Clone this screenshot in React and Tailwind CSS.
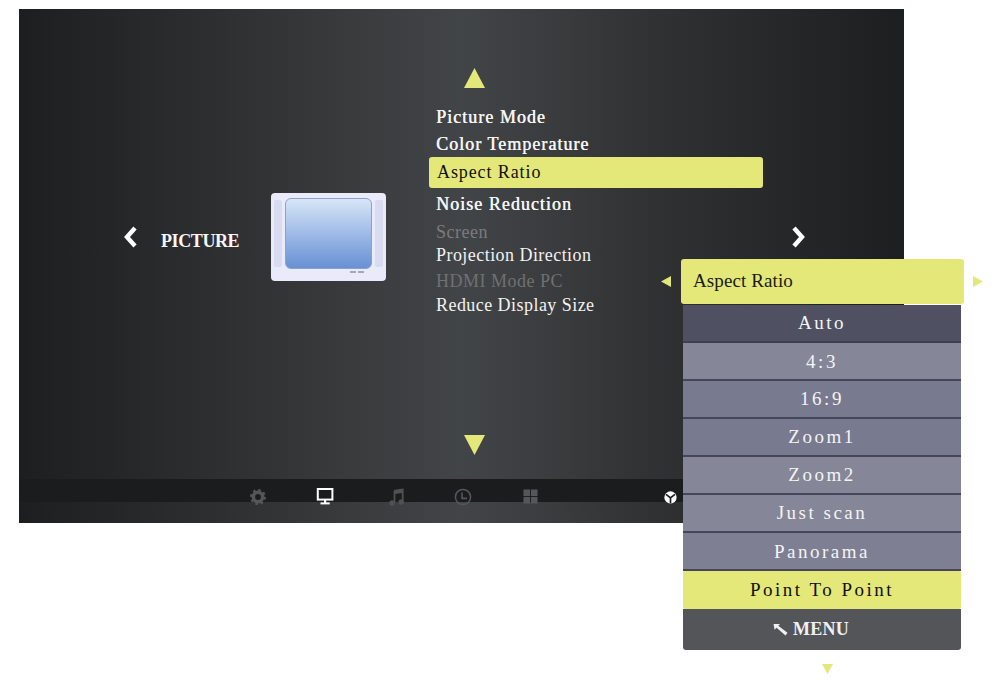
const serif = "font-['Liberation_Serif',serif]";

function Triangle({ dir, className }) {
  const points = {
    up: '50,0 100,100 0,100',
    down: '0,0 100,0 50,100',
    left: '100,0 100,100 0,50',
    right: '0,0 100,50 0,100',
  };
  return (
    <svg viewBox="0 0 100 100" preserveAspectRatio="none" className={className}>
      <polygon points={points[dir]} fill="#e3e878" />
    </svg>
  );
}

function Chevron({ flip }) {
  return (
    <svg viewBox="0 0 14 22" className="w-[14px] h-[22px]">
      <polyline
        points={flip ? '3,2 11,11 3,20' : '11,2 3,11 11,20'}
        fill="none"
        stroke="#fff"
        strokeWidth="4.4"
      />
    </svg>
  );
}

function GearIcon() {
  return (
    <svg viewBox="0 0 20 20" className="w-[18px] h-[18px]">
      <circle cx="10" cy="10" r="5.2" fill="none" stroke="#545658" strokeWidth="4" />
      <circle cx="10" cy="10" r="7.6" fill="none" stroke="#545658" strokeWidth="2.6" strokeDasharray="2.9 3.07" />
    </svg>
  );
}

function MonitorIcon() {
  return (
    <svg viewBox="0 0 18 17" className="w-[18px] h-[17px]">
      <rect x="1.8" y="1" width="14.6" height="10.6" fill="none" stroke="#fff" strokeWidth="2" />
      <rect x="8" y="12" width="2.2" height="3" fill="#fff" />
      <rect x="4.5" y="14.4" width="9.2" height="2" fill="#fff" />
    </svg>
  );
}

function MusicIcon() {
  return (
    <svg viewBox="0 0 18 18" className="w-[18px] h-[18px]">
      <path d="M6.6 3 Q7 1.6 9 1.4 L16.6 0.4 V13.5 H14.8 V5 L8.4 6 V15 H6.6 Z" fill="#4f5153" />
      <circle cx="5" cy="15" r="2.7" fill="#4f5153" />
      <circle cx="14.2" cy="14" r="2.7" fill="#4f5153" />
    </svg>
  );
}

function ClockIcon() {
  return (
    <svg viewBox="0 0 18 18" className="w-[18px] h-[18px]">
      <circle cx="9" cy="9" r="7.6" fill="none" stroke="#545658" strokeWidth="1.5" />
      <path d="M8 4.5 V10.4 H13" fill="none" stroke="#545658" strokeWidth="1.6" />
    </svg>
  );
}

function GridIcon() {
  return (
    <svg viewBox="0 0 16 16" className="w-[15px] h-[15px]">
      <rect x="0.5" y="0.5" width="7" height="7" fill="#545658" />
      <rect x="8.5" y="0.5" width="7" height="7" fill="#545658" />
      <rect x="0.5" y="8.5" width="7" height="7" fill="#545658" />
      <rect x="8.5" y="8.5" width="7" height="7" fill="#545658" />
    </svg>
  );
}

function CubeIcon() {
  return (
    <svg viewBox="0 0 14 14" className="w-[13px] h-[13px]">
      <circle cx="7" cy="7" r="6.6" fill="#fff" />
      <path d="M7 7.4 L2.2 3.6 M7 7.4 L11.8 3.6 M7 7.4 V13.5" stroke="#1b1c1e" strokeWidth="1.8" />
    </svg>
  );
}

function TvIllustration() {
  return (
    <div className="w-[115px] h-[88px] rounded-[4px] bg-[#e9ebfa] flex gap-[3px] px-[3px] pt-[5px]">
      <div className="w-[8px] h-[67px] mt-[2px] rounded-[2px] bg-[#d9dcf1]" />
      <div className="w-[87px]">
        <div className="h-[71px] rounded-[6px] border border-[#8da2c9] bg-gradient-to-b from-[#d8e6f7] to-[#6890d4]" />
        <div className="flex justify-end gap-[2px] pr-[8px] pt-[2px]">
          <div className="w-[6px] h-[2px] bg-[#a3a8b8]" />
          <div className="w-[6px] h-[2px] bg-[#a3a8b8]" />
        </div>
      </div>
      <div className="w-[8px] h-[67px] mt-[2px] rounded-[2px] bg-[#d9dcf1]" />
    </div>
  );
}

const strong = 'text-[#f4f4f4] tracking-[1.03px] [text-shadow:0.4px_0_0_currentColor]';

const menuRows = [
  { label: 'Picture Mode', height: 'h-[27px]', style: strong },
  { label: 'Color Temperature', height: 'h-[25px]', style: strong },
  { label: 'Aspect Ratio', height: 'h-[31px]', active: true },
  { label: 'Noise Reduction', height: 'h-[32px] pt-[4px]', style: strong },
  { label: 'Screen', height: 'h-[23px]', style: 'text-[#7a7c7e] tracking-[0.5px]' },
  { label: 'Projection Direction', height: 'h-[26px]', style: 'text-[#f2f2f2] tracking-[0.45px]' },
  { label: 'HDMI Mode PC', height: 'h-[24px]', style: 'text-[#6f7173] tracking-[0.5px]' },
  { label: 'Reduce Display Size', height: 'h-[26px]', style: 'text-[#f2f2f2] tracking-[0.45px]' },
];

const options = [
  { label: 'Auto', style: 'pt-[1px] bg-[#4f5163] border-b-2 border-[#3e4052] text-[#f4f4f4]' },
  { label: '4:3', style: 'pt-[3px] bg-[#858698] border-b-2 border-[#454659] text-[#f4f4f4]' },
  { label: '16:9', style: 'pt-[1px] bg-[#787a8f] border-b-2 border-[#454659] text-[#f4f4f4]' },
  { label: 'Zoom1', style: 'pt-[1px] bg-[#787a8f] border-b-2 border-[#454659] text-[#f4f4f4]' },
  { label: 'Zoom2', style: 'pt-[1px] bg-[#858698] border-b-2 border-[#454659] text-[#f4f4f4]' },
  { label: 'Just scan', style: 'pt-[1px] bg-[#858698] border-b-2 border-[#454659] text-[#f4f4f4]' },
  { label: 'Panorama', style: 'pt-[3px] bg-[#7e7f93] border-b-2 border-[#454659] text-[#f4f4f4]' },
  { label: 'Point To Point', style: 'pt-[1px] bg-[#e3e878] rounded-[2px] text-[#111]' },
];

export default function App() {
  return (
    <div className={`relative w-[1000px] h-[688px] bg-white overflow-hidden pt-[9px] pl-[19px] ${serif}`}>
      <div className="w-[885px] h-[514px] flex flex-col bg-[linear-gradient(90deg,#1d1e1f_0%,#323335_28%,#424547_50%,#303133_72%,#1d1e1f_100%)]">
        <div className="h-[470px] flex">
          <div className="w-[410px] pl-[105px] pt-[184px] flex items-start">
            <div className="mt-[33px]">
              <Chevron />
            </div>
            <div className="ml-[23px] w-[110px] mt-[37px] text-[18px] leading-[22px] font-bold text-[#f6f6f6] tracking-[-0.4px]">
              PICTURE
            </div>
            <TvIllustration />
          </div>

          <div className="w-[334px] pt-[59px]">
            <div className="pl-[35px]">
              <Triangle dir="up" className="w-[21px] h-[20px]" />
            </div>
            <div className="mt-[17px] text-[18px] leading-[24px]">
              {menuRows.map((row) =>
                row.active ? (
                  <div key={row.label} className={`${row.height} rounded-[3px] bg-[#e3e878] pl-[8px] pt-[3px] text-[#111] tracking-[0.9px]`}>
                    {row.label}
                  </div>
                ) : (
                  <div key={row.label} className={`${row.height} pl-[7px] ${row.style}`}>
                    {row.label}
                  </div>
                )
              )}
            </div>
            <div className="pl-[35px] mt-[116px]">
              <Triangle dir="down" className="w-[21px] h-[20px]" />
            </div>
          </div>

          <div className="ml-[28px] mt-[217px]">
            <Chevron flip />
          </div>
        </div>

        <div className="h-[23px] bg-[#1b1c1e] flex items-start pt-[9px] pl-[230px]">
          <div className="w-[67px]"><GearIcon /></div>
          <div className="w-[71px]"><MonitorIcon /></div>
          <div className="w-[67px]"><MusicIcon /></div>
          <div className="w-[69px]"><ClockIcon /></div>
          <div className="w-[141px] pt-[1px]"><GridIcon /></div>
          <div className="pt-[3px]"><CubeIcon /></div>
        </div>
      </div>

      {/* aspect ratio popup sits over the menu */}
      <div className="absolute left-[661px] top-[259px] w-[323px]">
        <div className="flex items-center">
          <Triangle dir="left" className="w-[10px] h-[11px]" />
          <div className="ml-[10px] w-[283px] h-[45px] rounded-[3px] bg-[#e3e878] flex items-center pl-[12px] text-[19px] tracking-[0.1px] text-[#1a1a1a]">
            Aspect Ratio
          </div>
          <Triangle dir="right" className="ml-[9px] w-[10px] h-[11px]" />
        </div>
        <div className="ml-[22px] mt-[1px] w-[278px] text-[19px] tracking-[2.5px] text-center">
          {options.map((option) => (
            <div key={option.label} className={`h-[38px] ${option.style} flex items-center justify-center`}>
              {option.label}
            </div>
          ))}
          <div className="h-[41px] rounded-b-[3px] bg-[#545558] flex items-center justify-center gap-[5px] pr-[22px] font-bold text-[18px] tracking-[0.3px] text-[#f0f0f0]">
            <svg viewBox="0 0 16 14" className="w-[15px] h-[13px]">
              <path d="M0.5 1 H7.5 L5.6 3 L15.5 10.6 L13.4 13.4 L3.8 5.2 L1.6 7.4 Z" fill="#f0f0f0" />
            </svg>
            MENU
          </div>
        </div>
        <div className="ml-[161px] mt-[14px]">
          <Triangle dir="down" className="w-[11px] h-[10px]" />
        </div>
      </div>
    </div>
  );
}
